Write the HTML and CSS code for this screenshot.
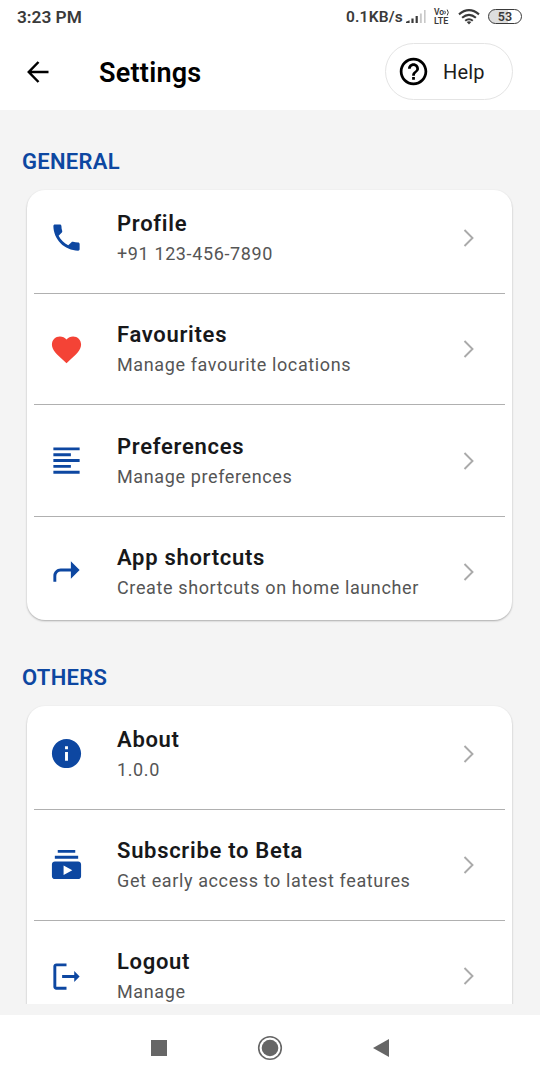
FILE: index.html
```html
<!DOCTYPE html>
<html lang="en">
<head>
<meta charset="utf-8">
<title>Settings</title>
<link rel="stylesheet" href="styles.css">
</head>
<body>
<svg class="defs" width="0" height="0">
  <symbol id="chevron" viewBox="0 0 12 18"><path d="M1.5 1L9.5 9L1.5 17" fill="none" stroke="#aaaaaa" stroke-width="1.9"/></symbol>
</svg>
<div class="screen">
  <div class="status">
    <span class="time">3:23 PM</span>
    <span class="speed">0.1KB/s</span>
    <svg class="signal" width="20" height="14" viewBox="0 0 20 14"><path d="M0 13v-1.2L3.6 10.2V13zM5.4 8.5h2.2V13H5.4zM9.6 6h2.2v7H9.6z" fill="#3a3a3a"/><path d="M13.9 3.5h1.9V13h-1.9zM18 0h1.6v13H18z" fill="#c8c8c8"/></svg>
    <div class="volte"><div class="vo">Vo<svg width="6" height="7" viewBox="0 0 6 7"><path d="M.7 1.8Q2 3.5.7 5.2M3.2.6Q5.4 3.5 3.2 6.4" fill="none" stroke="#3a3a3a"/></svg></div><div class="lte">LTE</div></div>
    <svg class="wifi" width="22" height="16" viewBox="0 0 22 16"><g fill="none" stroke="#3a3a3a" stroke-width="2.1"><path d="M1 5.4Q11-3 21 5.4M4.1 8.8Q11 3 17.9 8.8M7.2 11.8Q11 8.7 14.8 11.8"/></g><path d="M11 15.6L8.7 13Q11 11.5 13.3 13z" fill="#3a3a3a"/></svg>
    <span class="battery">53</span>
  </div>
  <div class="appbar">
    <svg class="back" width="24" height="24" viewBox="0 0 24 24"><path d="M23.5 12H3.8M13.5 2L3.8 12L13.5 22" fill="none" stroke="#000" stroke-width="2.5"/></svg>
    <h1 class="title">Settings</h1>
    <div class="help">
      <svg width="33" height="33" viewBox="0 0 24 24"><path d="M11 18h2v-2h-2v2zm1-16C6.48 2 2 6.48 2 12s4.48 10 10 10 10-4.48 10-10S17.52 2 12 2zm0 18c-4.41 0-8-3.59-8-8s3.59-8 8-8 8 3.59 8 8-3.59 8-8 8zm0-14c-2.21 0-4 1.79-4 4h2c0-1.1.9-2 2-2s2 .9 2 2c0 2-3 1.75-3 5h2c0-2.25 3-2.5 3-5 0-2.21-1.79-4-4-4z"/></svg>
      <span>Help</span>
    </div>
  </div>
  <div class="content">
    <h2 class="section">GENERAL</h2>
    <div class="card">
      <div class="row">
        <svg class="icon" viewBox="0 0 24 24"><path d="M6.62 10.79c1.44 2.83 3.76 5.14 6.59 6.59l2.2-2.2c.27-.27.67-.36 1.02-.24 1.12.37 2.33.57 3.57.57.55 0 1 .45 1 1V20c0 .55-.45 1-1 1-9.39 0-17-7.61-17-17 0-.55.45-1 1-1h3.5c.55 0 1 .45 1 1 0 1.25.2 2.45.57 3.57.11.35.03.74-.25 1.02l-2.2 2.2z"/></svg>
        <div class="text"><div class="name">Profile</div><div class="sub">+91 123-456-7890</div></div>
        <svg class="chevron"><use href="#chevron"/></svg>
      </div>
      <div class="row">
        <svg class="icon heart" viewBox="0 0 24 24"><path d="M12 21.35l-1.45-1.32C5.4 15.36 2 12.28 2 8.5 2 5.42 4.42 3 7.5 3c1.74 0 3.41.81 4.5 2.09C13.09 3.81 14.76 3 16.5 3 19.58 3 22 5.42 22 8.5c0 3.78-3.4 6.86-8.55 11.54L12 21.35z"/></svg>
        <div class="text"><div class="name">Favourites</div><div class="sub">Manage favourite locations</div></div>
        <svg class="chevron"><use href="#chevron"/></svg>
      </div>
      <div class="row">
        <svg class="icon" viewBox="0 0 24 24"><path d="M15 15H3v2h12v-2zm0-8H3v2h12V7zM3 13h18v-2H3v2zm0 8h18v-2H3v2zM3 3v2h18V3H3z"/></svg>
        <div class="text"><div class="name">Preferences</div><div class="sub">Manage preferences</div></div>
        <svg class="chevron"><use href="#chevron"/></svg>
      </div>
      <div class="row">
        <svg class="icon" viewBox="0 0 24 24"><path d="M21 11l-6-6v5H8c-2.76 0-5 2.24-5 5v4h2v-4c0-1.65 1.35-3 3-3h7v5l6-6z"/></svg>
        <div class="text"><div class="name">App shortcuts</div><div class="sub">Create shortcuts on home launcher</div></div>
        <svg class="chevron"><use href="#chevron"/></svg>
      </div>
    </div>
    <h2 class="section">OTHERS</h2>
    <div class="card">
      <div class="row">
        <svg class="icon" viewBox="0 0 24 24"><path d="M12 2C6.48 2 2 6.48 2 12s4.48 10 10 10 10-4.48 10-10S17.52 2 12 2zm1 15h-2v-6h2v6zm0-8h-2V7h2v2z"/></svg>
        <div class="text"><div class="name">About</div><div class="sub">1.0.0</div></div>
        <svg class="chevron"><use href="#chevron"/></svg>
      </div>
      <div class="row">
        <svg class="icon" viewBox="0 0 24 24"><path d="M20 8H4V6h16v2zm-2-6H6v2h12V2zm4 10v8c0 1.1-.9 2-2 2H4c-1.1 0-2-.9-2-2v-8c0-1.1.9-2 2-2h16c1.1 0 2 .9 2 2zm-6 4l-6-3.27v6.53L16 16z"/></svg>
        <div class="text"><div class="name">Subscribe to Beta</div><div class="sub">Get early access to latest features</div></div>
        <svg class="chevron"><use href="#chevron"/></svg>
      </div>
      <div class="row">
        <svg class="icon" viewBox="0 0 24 24"><path d="M17.3 8.3V11H9v2h8.3v2.7L21 12zM5 5h7V3H5c-1.1 0-2 .9-2 2v14c0 1.1.9 2 2 2h7v-2H5V5z"/></svg>
        <div class="text"><div class="name">Logout</div><div class="sub">Manage</div></div>
        <svg class="chevron"><use href="#chevron"/></svg>
      </div>
    </div>
  </div>
  <div class="nav">
    <svg width="26" height="26" viewBox="0 0 26 26"><path d="M5 5h16v16H5z" fill="#666"/></svg>
    <svg width="26" height="26" viewBox="0 0 26 26"><circle cx="13" cy="13" r="11.3" fill="none" stroke="#666" stroke-width="1.6"/><circle cx="13" cy="13" r="8.3" fill="#666"/></svg>
    <svg width="26" height="26" viewBox="0 0 26 26"><path d="M5 13L21 4v18z" fill="#666"/></svg>
  </div>
</div>
</body>
</html>
```
FILE: styles.css
```css
* { box-sizing: border-box; }
body { margin: 0; font-family: Roboto, "Liberation Sans", sans-serif; background: #fff; }
svg { flex: none; display: block; }
.defs { position: absolute; }
.screen { width: 540px; height: 1080px; display: flex; flex-direction: column; background: #fff; overflow: hidden; }
.status { height: 33px; flex: none; display: flex; align-items: center; padding: 0 18px 0 17px; color: #3a3a3a; font-weight: 600; line-height: 20px; }
.time { flex: 1; font-size: 17.3px; }
.speed { font-size: 15.5px; letter-spacing: 0.2px; }
.signal { margin: 0 8px 0 3px; }
.volte { width: 17px; font-size: 9px; }
.vo, .lte { height: 9px; display: flex; align-items: center; line-height: 9px; }
.vo { font-size: 8.5px; }
.wifi { margin: 0 8px 0 7px; }
.battery { width: 34px; height: 15px; border: 1.6px solid #3a3a3a; border-radius: 8px; background: linear-gradient(90deg, #dedede 60%, #fff 60%); font-size: 12.5px; line-height: 13px; text-align: center; }
.appbar { height: 77px; flex: none; display: flex; align-items: center; padding: 0 27px 0 25px; }
.title { flex: 1; margin: 2px 0 0 50px; font-size: 27px; line-height: 32px; font-weight: 600; letter-spacing: 0.25px; color: #000; }
.help { display: flex; align-items: center; gap: 13px; width: 128px; height: 57px; padding-left: 11px; border: 1px solid #e4e4e4; border-radius: 29px; font-size: 20px; letter-spacing: 0.2px; color: #1c1c1c; }
.content { height: 894px; flex: none; padding: 37px 28px 0 22px; background: #f4f4f4; overflow: hidden; }
.section { margin: 0 0 12.8px; font-size: 22px; line-height: 30px; font-weight: 600; letter-spacing: 0.3px; color: #0d47a1; }
.card { margin: 0 0 42.7px 5px; padding: 0 7px; border-radius: 18px; background: #fff; box-shadow: 0 1px 2px rgba(0, 0, 0, 0.3); }
.row { height: 111.5px; display: flex; align-items: center; padding: 0 30px 0 15px; border-bottom: 1.5px solid #b0b0b0; }
.row:first-child { height: 104px; padding-bottom: 7px; }
.row:last-child { height: 103.3px; border: 0; padding-top: 7px; }
.icon { width: 35px; height: 35px; fill: #0d47a1; }
.heart { fill: #f44336; }
.text { flex: 1; margin-left: 33px; padding-top: 2px; white-space: nowrap; }
.name { font-size: 22px; line-height: 30px; font-weight: 600; letter-spacing: 0.7px; color: #17181a; }
.sub { font-size: 18px; line-height: 30px; letter-spacing: 0.62px; color: #555; }
.chevron { width: 12px; height: 18px; }
.nav { height: 76px; flex: none; display: flex; align-items: flex-start; justify-content: center; gap: 85px; padding: 19.5px 1px 0 0; background: #fff; border-top: 11px solid #f4f4f4; }
```
